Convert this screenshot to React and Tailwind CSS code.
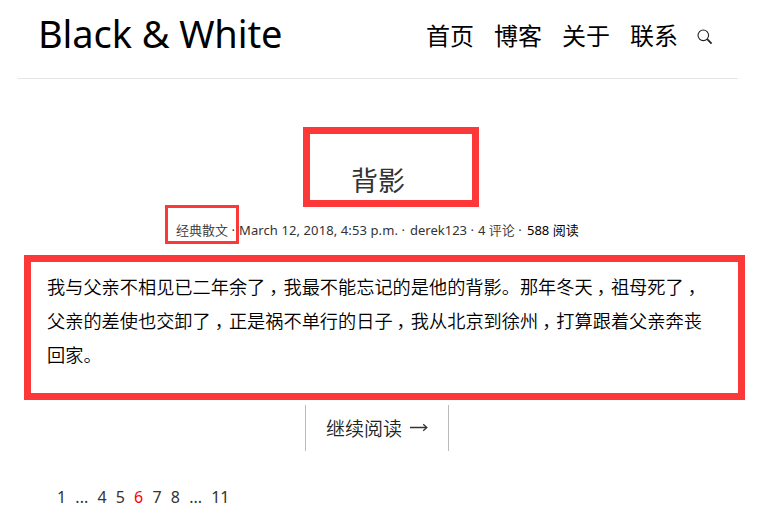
const NAV_ITEMS = ["首页", "博客", "关于", "联系"]

const PAGES = ["1", "...", "4", "5", "6", "7", "8", "..."]

const CURRENT_PAGE = "6"

// full-width comma
const COMMA = "\uff0c"

// every line is a list of clauses, "" at the end gives a trailing comma
const EXCERPT = [
    ["我与父亲不相见已二年余了", "我最不能忘记的是他的背影。那年冬天", "祖母死了", ""],
    ["父亲的差使也交卸了", "正是祸不单行的日子", "我从北京到徐州", "打算跟着父亲奔丧"],
    ["回家。"]
]

const SearchIcon = () => {
    return (
        <svg className="w-4 h-4" viewBox="0 0 16 16" fill="none" stroke="#222">
            <circle cx="6.3" cy="6.3" r="5.3" strokeWidth="1.1" />
            <path d="M10.2 10.2L14.6 14.6" strokeWidth="1.8" />
        </svg>
    )
}

const Header = () => {
    return (
        <header className="flex justify-between h-[79px] ml-[18px] w-[720px] pl-[20px] pr-[25px] border-b border-[#e5e5e5] text-black">

            <h1 className="text-[38px] leading-[52px] pt-[7px] -tracking-[0.1px] whitespace-nowrap">Black &amp; White</h1>

            <nav className="flex gap-5 pt-[18px] text-2xl leading-9 whitespace-nowrap">
                {NAV_ITEMS.map((item) => (
                    <a key={item} href="#">{item}</a>
                ))}
                <a href="#" className="pt-[11px] -ml-[1px]"><SearchIcon /></a>
            </nav>

        </header>
    )
}

// the comma sits in the middle of its own cell
const ExcerptLine = ({ clauses }) => {
    return (
        <div className="whitespace-nowrap">
            {clauses.map((clause, i) => (
                <span key={i}>
                    {clause}
                    {i < clauses.length - 1 && <span className="pl-[4px] -mr-[4px]">{COMMA}</span>}
                </span>
            ))}
        </div>
    )
}

const Post = () => {
    return (
        <article>

            {/* Title */}
            <div className="mt-[48px] ml-[303px] w-[176px] h-[80px] border-[7px] border-[#fc3838] pt-[27px] pl-[41px]">
                <h2 className="text-[27px] leading-10 text-[#333]">背影</h2>
            </div>

            {/* Meta */}
            <div className="relative flex ml-[176px] mt-[12px] h-[22px] text-[13px] leading-[22px] text-[#333] whitespace-nowrap">
                <span className="absolute -left-[11px] -top-[14px] w-[74px] h-[39px] border-[3px] border-[#fc3838]" />
                <span className="w-[63px]"><span className="font-[350]">经典散文</span> ·</span>
                <span className="w-[171px] tracking-[0.1px]">March 12, 2018, 4:53 p.m. ·</span>
                <span className="w-[68px]">derek123 ·</span>
                <span className="w-[49px]">4 <span className="font-[350]">评论</span> ·</span>
                <span className="text-black">588 阅读</span>
            </div>

            {/* Excerpt */}
            <div className="mt-[14px] ml-[24px] w-[721px] h-[145px] border-[7px] border-[#fc3838] pt-[8px] pl-[16px] text-[18.2px] leading-[34px] font-[350] text-black">
                {EXCERPT.map((clauses) => (
                    <ExcerptLine key={clauses[0]} clauses={clauses} />
                ))}
            </div>

            {/* Read more */}
            <a href="#" className="flex items-center mt-[5px] ml-[305px] w-[144px] h-[46px] pt-[2px] pl-[20px] border-x border-[#bbb] text-[19px] font-[350] text-[#222] whitespace-nowrap">
                继续阅读
                <svg className="ml-[8px] mb-[4px] w-[18px] h-[10px]" viewBox="0 0 18 10" fill="none">
                    <path d="M0 5.5H16" stroke="#333" strokeWidth="1.5" />
                    <path d="M13.2 2.3L16.8 5.5L13.2 8.7" stroke="#333" strokeWidth="1.3" />
                </svg>
            </a>

        </article>
    )
}

const Pagination = () => {
    return (
        <div className="flex mt-[34px] ml-[57px] text-[16px] leading-6 text-[#333]">
            {PAGES.map((page, i) => (
                <a
                    key={i}
                    href="#"
                    className={page === CURRENT_PAGE ? "mr-[9.2px] text-[#f00]" : "mr-[9.2px]"}
                >
                    {page}
                </a>
            ))}
            <a href="#">11</a>
        </div>
    )
}

const App = () => {
    return (
        <div className="w-[779px] h-[522px] overflow-hidden bg-white font-['Noto_Sans','Noto_Sans_CJK_SC',sans-serif]">
            <Header />
            <Post />
            <Pagination />
        </div>
    )
}

export default App
